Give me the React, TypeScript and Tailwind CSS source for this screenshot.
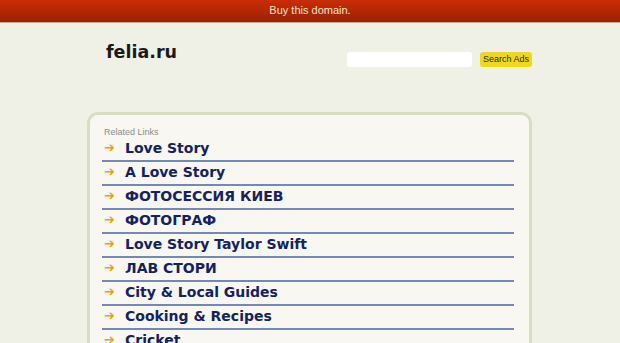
import React from 'react';

const links = [
  'Love Story',
  'A Love Story',
  'ФОТОСЕССИЯ КИЕВ',
  'ФОТОГРАФ',
  'Love Story Taylor Swift',
  'ЛАВ СТОРИ',
  'City & Local Guides',
  'Cooking & Recipes',
  'Cricket',
];

export default function App() {
  return (
    <div className="h-[343px] overflow-hidden bg-[#f0f1e6] font-['Liberation_Sans',Arial,sans-serif]">
      {/* top bar */}
      <div className="h-[23px] bg-gradient-to-b from-[#c92d05] to-[#9a2200] border-b border-[#b8b39a] flex items-center justify-center">
        <a href="#" className="text-[11px] text-[#f6e2cc] pb-[2px]">Buy this domain.</a>
      </div>

      {/* header */}
      <div className="flex items-start pl-[106px] pr-[88px] pt-[17px] h-[89px]">
        <h1 className="text-[17.5px] leading-[24px] font-bold text-[#1a1a1a] font-['DejaVu_Sans',Verdana,sans-serif]">felia.ru</h1>
        <div className="ml-auto flex items-center gap-[8px] mt-[12px]">
          <input className="w-[125px] h-[15px] bg-white rounded-[3px] outline-none" />
          <button className="h-[15px] w-[52px] bg-[#efd81b] rounded-[3px] text-[9px] leading-[15px] text-[#2a2a10]">Search Ads</button>
        </div>
      </div>

      {/* related links */}
      <div className="ml-[87px] w-[445px] h-[260px] border-[3px] border-[#d8dec2] rounded-[11px] bg-[#f8f7f1] pl-[12px] pr-[15px] pt-[11px]">
        <div className="text-[9px] leading-[12px] text-[#8c8c8c] pl-[2px]">Related Links</div>
        <ul>
          {links.map((l) => (
            <li key={l} className="h-[24px] pb-[3px] flex items-center border-b-2 border-[#7389bb] font-['DejaVu_Sans',Verdana,sans-serif]">
              <span className="w-[23px] pl-[2px] text-[#efa10a] text-[13px] font-bold leading-none">➔</span>
              <a href="#" className="text-[14px] font-bold text-[#142262] leading-none">{l}</a>
            </li>
          ))}
        </ul>
      </div>
    </div>
  );
}
